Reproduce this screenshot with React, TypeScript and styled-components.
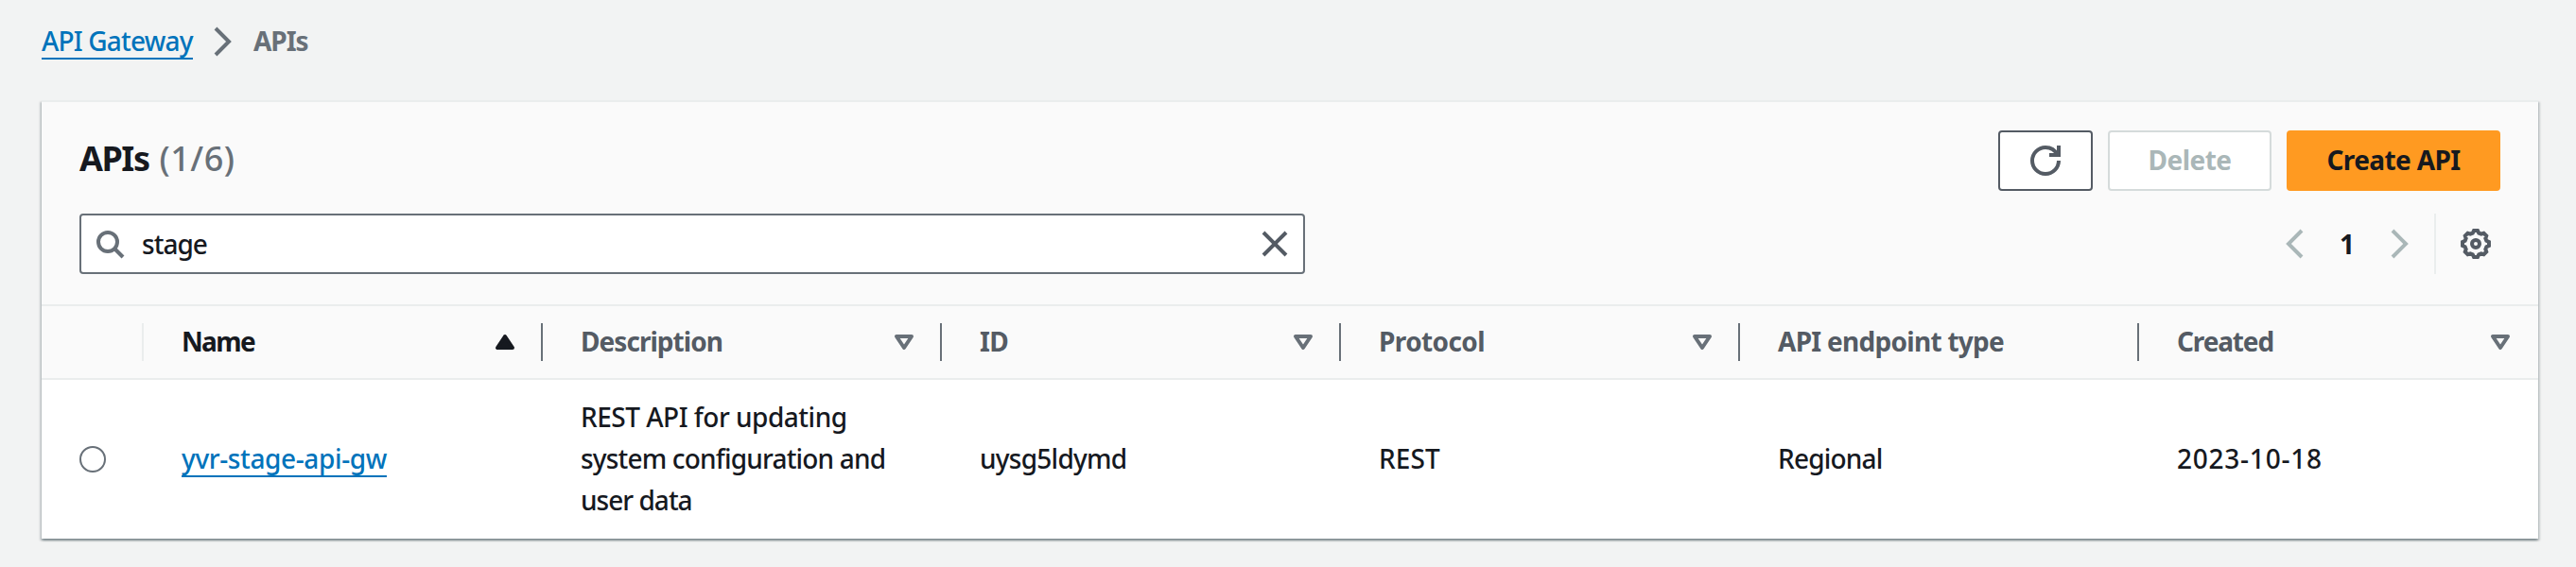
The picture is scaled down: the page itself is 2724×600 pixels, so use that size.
import React from 'react';
import styled, { createGlobalStyle } from 'styled-components';

const color = {
  page: '#f2f3f3',
  panel: '#fafafa',
  text: '#16191f',
  muted: '#687078',
  icon: '#545b64',
  link: '#0073bb',
  line: '#eaeded',
  disabled: '#aab7b8',
  disabledBorder: '#d5dbdb',
  primary: '#ff9a21',
};

const GlobalStyle = createGlobalStyle`
  *, *::before, *::after { box-sizing: border-box; }
  body {
    margin: 0;
    background: ${color.page};
    color: ${color.text};
    font-family: "Noto Sans", "Open Sans", sans-serif;
    font-size: 28px;
    font-weight: 500;
    line-height: 44px;
  }
`;

const Page = styled.main`
  display: flex;
  flex-direction: column;
  gap: 40px;
  height: 600px;
  padding: 22px 40px 30px 44px;
  overflow: hidden;
`;

/* letter-spacing tightens the face per string */
const Text = styled.span<{ $track?: number }>`
  display: block;
  white-space: nowrap;
  letter-spacing: ${(p) => p.$track ?? 0}px;
`;

const Breadcrumbs = styled.nav`
  display: flex;
  align-items: flex-start;
  height: 44px;
`;

const Link = styled.a<{ $track: number }>`
  height: 42px;
  margin-bottom: 2px;
  line-height: 44px;
  white-space: nowrap;
  letter-spacing: ${(p) => p.$track}px;
  color: ${color.link};
  border-bottom: 2px solid ${color.link};
`;

const CrumbLink = styled(Link)`
  width: 160px;
  height: 41px;
  margin: 0;
  line-height: 42px;
`;

const Crumb = styled(Text)`
  font-weight: 700;
  line-height: 42px;
  color: ${color.muted};
`;

const Icon = styled.svg<{ $color?: string }>`
  display: block;
  flex: none;
  width: 32px;
  height: 32px;
  fill: none;
  stroke: ${(p) => p.$color ?? color.icon};
  stroke-width: 2;
`;

const CrumbIcon = styled(Icon)`
  margin: 6px 16px;
`;

const Card = styled.section`
  width: 2640px;
  height: 464px;
  background: #fff;
  border-top: 2px solid ${color.line};
  box-shadow:
    0 2px 2px 0 rgba(0, 28, 36, 0.3),
    2px 2px 2px 0 rgba(0, 28, 36, 0.15),
    -2px 2px 2px 0 rgba(0, 28, 36, 0.15);
`;

const CardHeader = styled.header`
  display: flex;
  flex-direction: column;
  gap: 24px;
  height: 214px;
  padding: 30px 40px 0;
  background: ${color.panel};
`;

const HeaderRow = styled.div`
  display: flex;
  justify-content: space-between;
  height: 64px;
`;

const Title = styled.h1`
  display: flex;
  gap: 11px;
  margin: 0;
  font-size: 36px;
  font-weight: 700;
  line-height: 59px;
`;

const Counter = styled(Text)`
  font-weight: 500;
  color: ${color.muted};
`;

const Actions = styled.div`
  display: flex;
  gap: 16px;
`;

const Button = styled.button<{ $width: number; $kind: 'normal' | 'disabled' | 'primary' }>`
  display: flex;
  align-items: center;
  justify-content: center;
  width: ${(p) => p.$width}px;
  height: 64px;
  padding: 0 0 2px;
  font: inherit;
  font-weight: 700;
  border: 2px solid;
  border-radius: 4px;
  background: ${(p) => (p.$kind === 'primary' ? color.primary : '#fff')};
  color: ${(p) => (p.$kind === 'disabled' ? color.disabled : color.text)};
  border-color: ${(p) =>
    ({ normal: color.icon, disabled: color.disabledBorder, primary: color.primary })[p.$kind]};
`;

const IconButton = styled(Button)`
  padding: 0;
`;

const SearchBox = styled.label`
  display: flex;
  align-items: center;
  width: 1296px;
  height: 64px;
  padding: 0 14px;
  background: #fff;
  border: 2px solid ${color.muted};
  border-radius: 4px;
`;

const Query = styled(Text)`
  flex: 1;
  padding-left: 18px;
`;

const Tools = styled.div`
  display: flex;
  align-items: center;
`;

const PageNumber = styled(Text)`
  width: 78px;
  text-align: center;
  font-weight: 700;
  padding: 0 2px 1px 0;
`;

const Preferences = styled.div`
  display: flex;
  align-items: center;
  height: 64px;
  margin-left: 20px;
  padding: 0 10px 0 26px;
  border-left: 2px solid ${color.line};
`;

const Grid = styled.div`
  display: grid;
  grid-template-columns: 108px repeat(6, 422px);
`;

const HeadRow = styled(Grid)`
  height: 80px;
  align-items: center;
  background: ${color.panel};
  border-top: 2px solid ${color.line};
  border-bottom: 2px solid ${color.line};
`;

const HeadCell = styled.div<{ $active?: boolean; $divider?: string }>`
  display: flex;
  align-items: center;
  justify-content: space-between;
  height: 40px;
  padding: 0 22px 0 40px;
  font-weight: 700;
  color: ${(p) => (p.$active ? color.text : color.icon)};
  border-right: 2px solid ${(p) => p.$divider ?? color.muted};
`;

const HeadLabel = styled(Text)`
  padding-bottom: 2px;
`;

const BodyRow = styled(Grid)`
  height: 168px;
  align-items: center;
`;

const Cell = styled.div`
  display: flex;
  flex-direction: column;
  align-items: flex-start;
  padding: 0 0 2px 40px;
`;

const RadioCell = styled.div`
  padding-left: 40px;
`;

const Radio = styled.span`
  display: block;
  width: 28px;
  height: 28px;
  background: #fff;
  border: 2px solid ${color.muted};
  border-radius: 50%;
`;

/* Cog outline: eight teeth around the hub */
const cogPath = (() => {
  const at = (radius: number, degrees: number) => {
    const a = (degrees * Math.PI) / 180;
    return `${(8 + radius * Math.cos(a)).toFixed(2)} ${(8 + radius * Math.sin(a)).toFixed(2)}`;
  };
  const points: string[] = [];
  for (let k = 0; k < 8; k += 1) {
    const mid = k * 45;
    points.push(at(7.05, mid - 8), at(7.05, mid + 8), at(5.9, mid + 16), at(5.9, mid + 29));
  }
  return `M${points.join('L')}Z`;
})();

type SortState = 'ascending' | 'none';

function SortIcon({ state }: { state: SortState }) {
  return (
    <Icon viewBox="0 0 16 16" $color={state === 'ascending' ? color.text : color.muted} strokeLinejoin="round">
      {state === 'ascending' ? (
        <path d="M4 11h8L8 5z" fill={color.text} />
      ) : (
        <path d="M4 5h8l-4 6z" />
      )}
    </Icon>
  );
}

type Column = { label: string; track: number; sort?: SortState };

const columns: Column[] = [
  { label: 'Name', track: -1.64, sort: 'ascending' },
  { label: 'Description', track: -0.96, sort: 'none' },
  { label: 'ID', track: -0.7, sort: 'none' },
  { label: 'Protocol', track: -0.6, sort: 'none' },
  { label: 'API endpoint type', track: -0.72 },
  { label: 'Created', track: -1.14, sort: 'none' },
];

export default function App() {
  return (
    <Page>
      <GlobalStyle />
      <Breadcrumbs>
        <CrumbLink $track={-0.82}>API Gateway</CrumbLink>
        <CrumbIcon viewBox="0 0 16 16" $color={color.muted}>
          <path d="m4 1 7 7-7 7" />
        </CrumbIcon>
        <Crumb $track={-1.05}>APIs</Crumb>
      </Breadcrumbs>

      <Card>
        <CardHeader>
          <HeaderRow>
            <Title>
              <Text $track={-1.46}>APIs</Text>
              <Counter $track={0.5}>(1/6)</Counter>
            </Title>
            <Actions>
              <IconButton $width={100} $kind="normal" aria-label="Refresh">
                <Icon viewBox="0 0 16 16">
                  <path d="M15 8c0 3.87-3.13 7-7 7s-7-3.13-7-7 3.13-7 7-7c2.79 0 5.2 1.63 6.33 4M10 5h5V0" />
                </Icon>
              </IconButton>
              <Button $width={173} $kind="disabled" disabled>
                <Text $track={-0.52}>Delete</Text>
              </Button>
              <Button $width={226} $kind="primary">
                <Text $track={-0.62}>Create API</Text>
              </Button>
            </Actions>
          </HeaderRow>
          <HeaderRow>
            <SearchBox>
              <Icon viewBox="0 0 16 16" $color={color.muted}>
                <circle cx="7" cy="7" r="5" />
                <path d="m15 15-4.5-4.5" />
              </Icon>
              <Query $track={-0.96}>stage</Query>
              <Icon viewBox="0 0 16 16">
                <path d="m2 2 12 12M14 2 2 14" />
              </Icon>
            </SearchBox>
            <Tools>
              <Icon viewBox="0 0 16 16" $color={color.disabled}>
                <path d="M11 1 4 8l7 7" />
              </Icon>
              <PageNumber>1</PageNumber>
              <Icon viewBox="0 0 16 16" $color={color.disabled}>
                <path d="m4 1 7 7-7 7" />
              </Icon>
              <Preferences>
                <Icon viewBox="0 0 16 16">
                  <path d={cogPath} />
                  <circle cx="8" cy="8" r="2" />
                </Icon>
              </Preferences>
            </Tools>
          </HeaderRow>
        </CardHeader>

        <HeadRow>
          <HeadCell $divider={color.line} />
          {columns.map((column, index) => (
            <HeadCell
              key={column.label}
              $active={column.sort === 'ascending'}
              $divider={index === columns.length - 1 ? 'transparent' : undefined}
            >
              <HeadLabel $track={column.track}>{column.label}</HeadLabel>
              {column.sort && <SortIcon state={column.sort} />}
            </HeadCell>
          ))}
        </HeadRow>

        <BodyRow>
          <RadioCell>
            <Radio role="radio" aria-checked="false" />
          </RadioCell>
          <Cell>
            <Link $track={-0.38}>yvr-stage-api-gw</Link>
          </Cell>
          <Cell>
            <Text $track={-0.5}>REST API for updating</Text>
            <Text $track={-0.82}>system configuration and</Text>
            <Text $track={-0.98}>user data</Text>
          </Cell>
          <Cell>
            <Text $track={-0.75}>uysg5ldymd</Text>
          </Cell>
          <Cell>
            <Text $track={0.1}>REST</Text>
          </Cell>
          <Cell>
            <Text $track={-0.8}>Regional</Text>
          </Cell>
          <Cell>
            <Text $track={0.76}>2023-10-18</Text>
          </Cell>
        </BodyRow>
      </Card>
    </Page>
  );
}
